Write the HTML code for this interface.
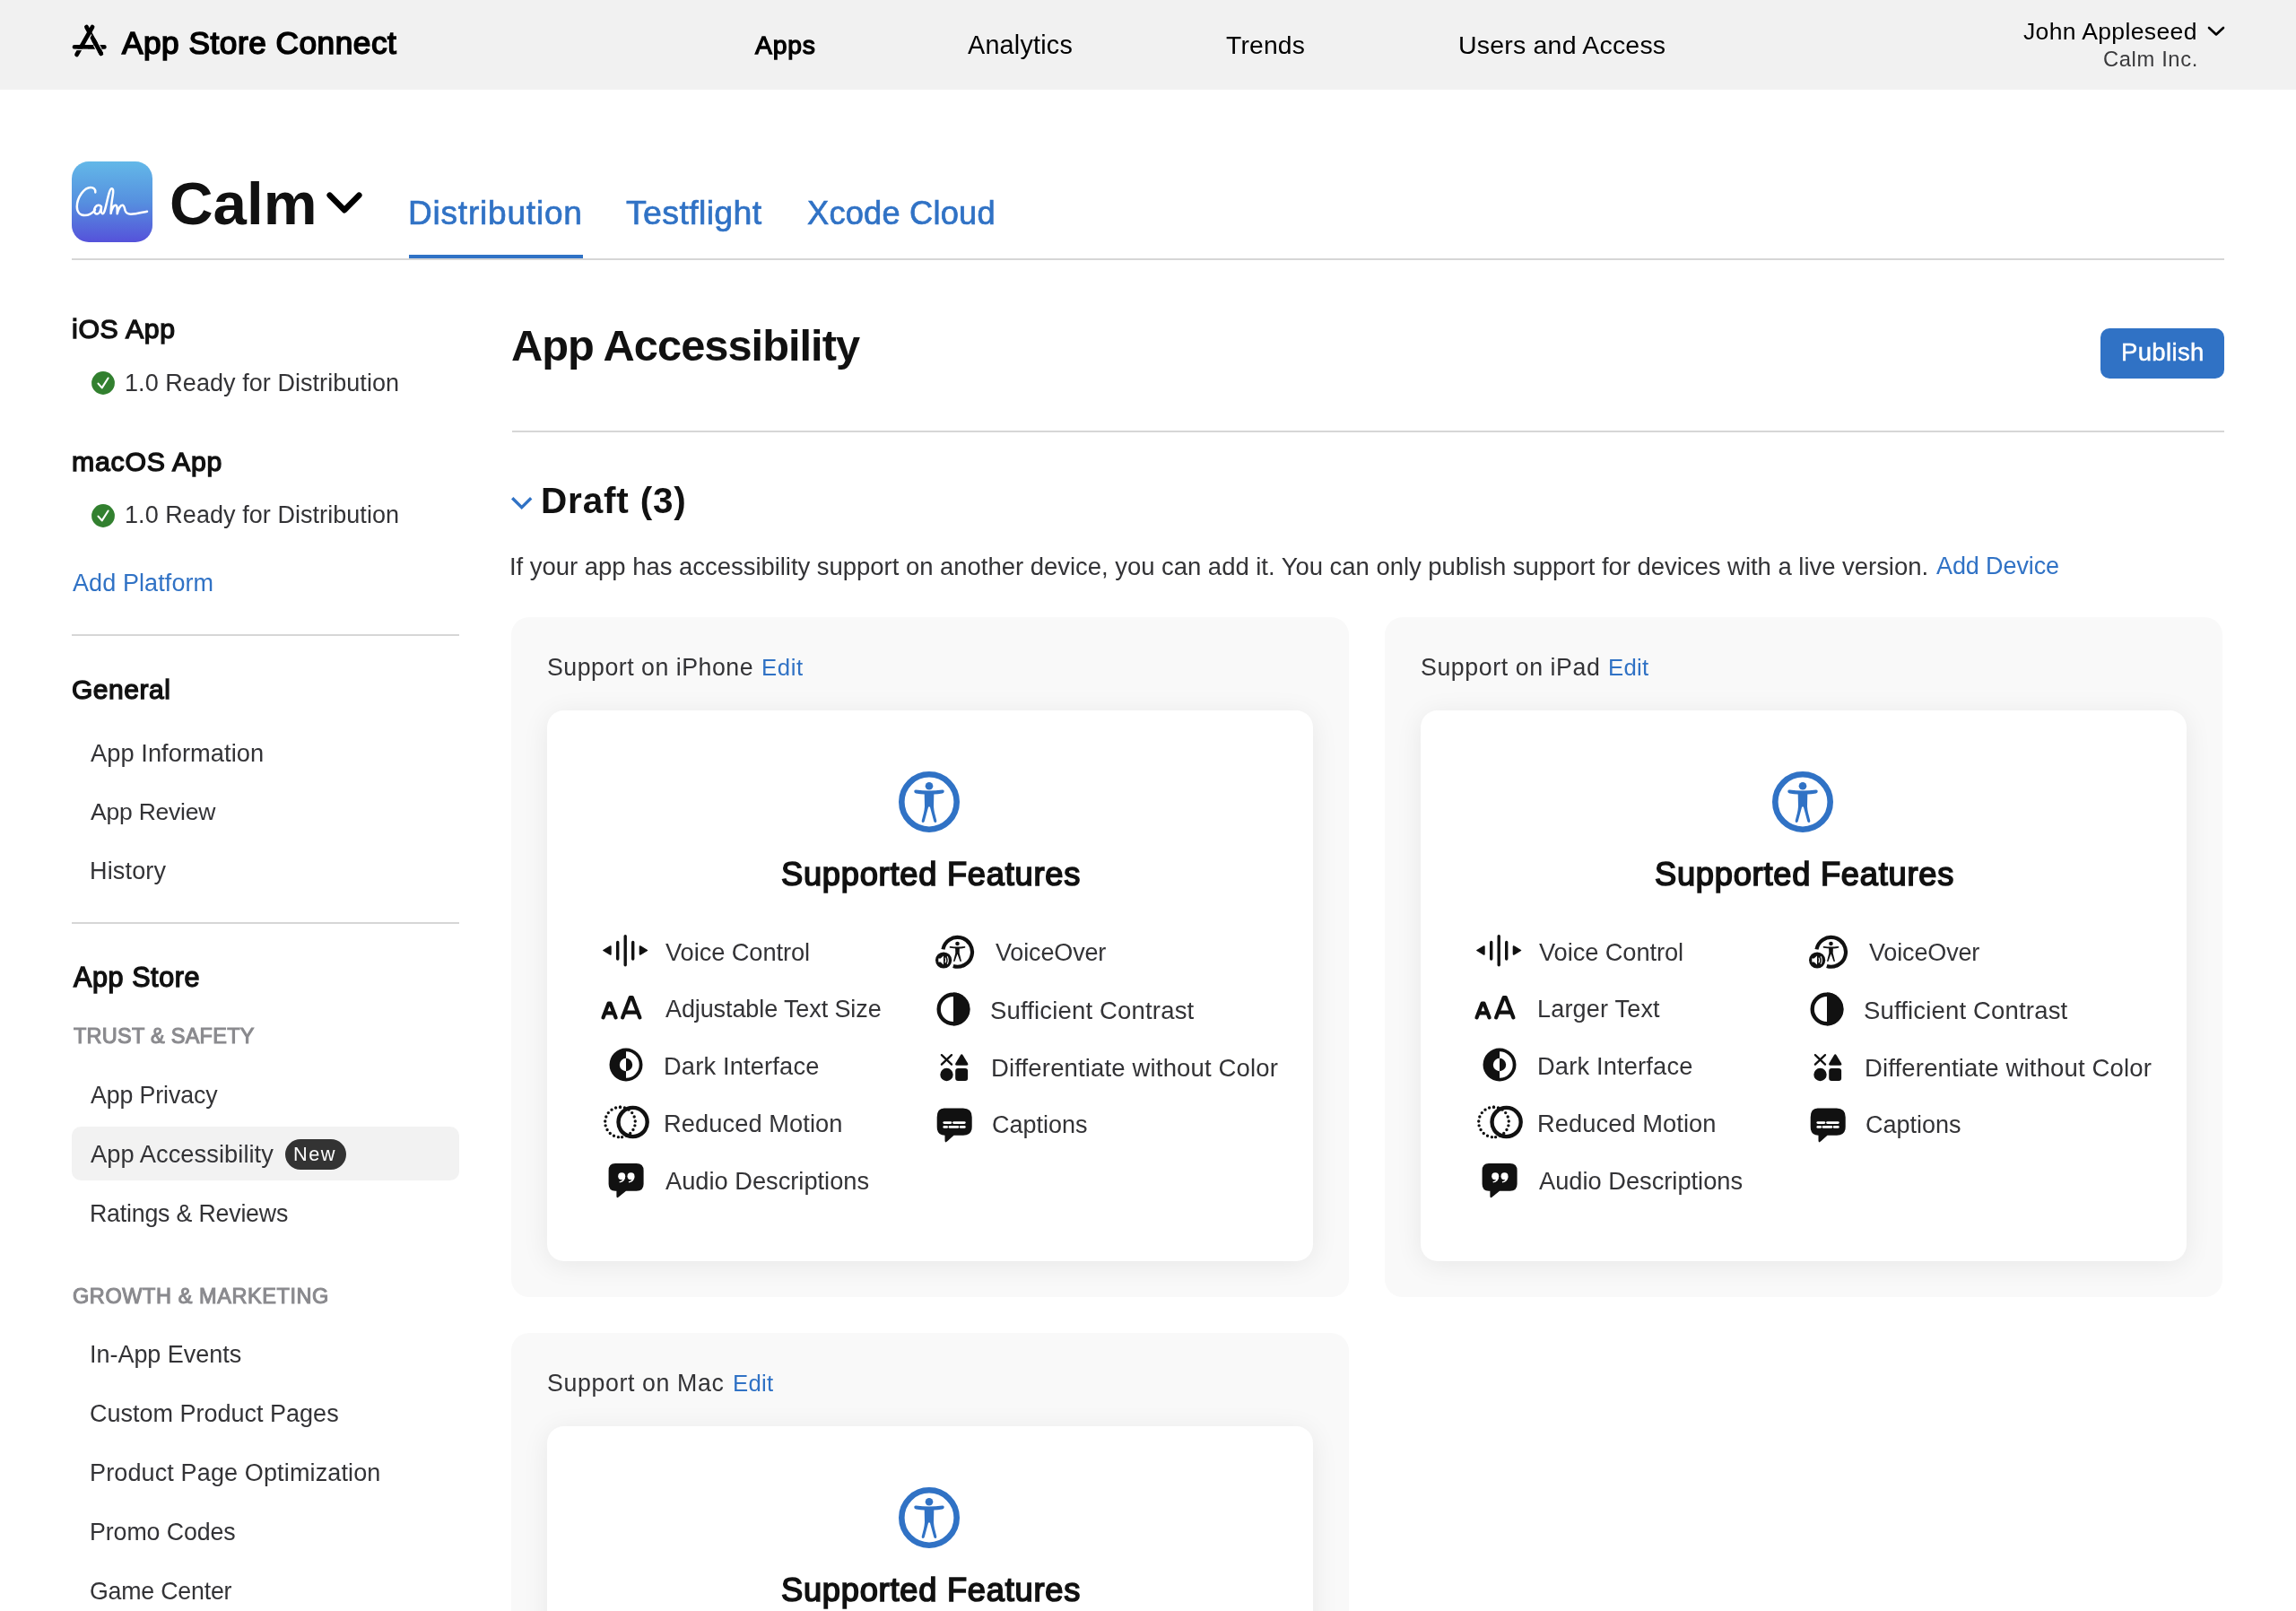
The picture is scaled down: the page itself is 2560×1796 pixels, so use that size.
<!DOCTYPE html>
<html><head><meta charset="utf-8"><title>App Store Connect</title>
<style>
html,body{margin:0;padding:0;background:#fff;width:2560px;height:1796px;overflow:hidden;position:relative}
body{font-family:"Liberation Sans",sans-serif;-webkit-font-smoothing:antialiased}
.t{position:absolute;white-space:nowrap;will-change:transform}
svg{overflow:visible}
</style></head><body>
<div style="position:absolute;left:0px;top:0px;width:2560px;height:100px;background:#f1f1f1"></div>
<svg style="position:absolute;left:78px;top:25px" width="44" height="40" viewBox="0 0 44 40"><g stroke-linecap="round" fill="none">
<line x1="18.4" y1="5" x2="34.8" y2="34.8" stroke="#000" stroke-width="4.7"/>
<line x1="23.7" y1="13.5" x2="20.9" y2="18.5" stroke="#f1f1f1" stroke-width="1.5" stroke-linecap="butt"/>
<line x1="25.1" y1="5" x2="7.5" y2="36" stroke="#000" stroke-width="4.7"/>
<line x1="5.05" y1="27.45" x2="38.35" y2="27.45" stroke="#000" stroke-width="4.7"/>
<rect x="2" y="29.8" width="18" height="1.3" fill="#f1f1f1" stroke="none"/>
<line x1="28.85" y1="24" x2="32.7" y2="31" stroke="#f1f1f1" stroke-width="6.8" stroke-linecap="butt"/>
<line x1="26.65" y1="20" x2="34.8" y2="34.8" stroke="#000" stroke-width="4.7"/>
</g></svg>
<div class="t " style="left:135.93px;top:29.86px;font-size:35.25px;line-height:35.25px;letter-spacing:0.500px;color:#000;-webkit-text-stroke:1.59px #000;">App Store Connect</div>
<div class="t " style="left:841.94px;top:35.85px;font-size:28.25px;line-height:28.25px;letter-spacing:0.833px;color:#000;-webkit-text-stroke:1.27px #000;">Apps</div>
<div class="t " style="left:1078.94px;top:36.06px;font-size:28.75px;line-height:28.75px;letter-spacing:0.225px;color:#000;">Analytics</div>
<div class="t " style="left:1367.37px;top:36.48px;font-size:28.25px;line-height:28.25px;letter-spacing:0.200px;color:#000;">Trends</div>
<div class="t " style="left:1625.80px;top:36.27px;font-size:28.5px;line-height:28.5px;letter-spacing:0.200px;color:#000;">Users and Access</div>
<div class="t " style="left:2255.79px;top:21.56px;font-size:26.5px;line-height:26.5px;letter-spacing:0.369px;color:#000;">John Appleseed</div>
<svg style="position:absolute;left:2460px;top:28px" width="22" height="14" viewBox="0 0 22 14"><polyline points="3,3 11,10.5 19,3" fill="none" stroke="#000" stroke-width="2.6" stroke-linecap="round" stroke-linejoin="round"/></svg>
<div class="t " style="left:2344.79px;top:53.89px;font-size:23.75px;line-height:23.75px;letter-spacing:0.625px;color:#3a3a3c;">Calm Inc.</div>
<svg style="position:absolute;left:80px;top:180px" width="90" height="90" viewBox="0 0 90 90"><defs><linearGradient id="cg" x1="0" y1="0" x2="0" y2="1"><stop offset="0" stop-color="#63b8e8"/><stop offset="0.5" stop-color="#5690df"/><stop offset="1" stop-color="#5552da"/></linearGradient></defs>
<rect x="0" y="0" width="90" height="90" rx="19" fill="url(#cg)"/>
<path d="M26.3 34.4 C26.6 31 24.5 28.9 21 28.9 C14 28.9 5.8 40 5.8 50.5 C5.8 56.5 9.5 60.1 14.6 60.1 C19.5 60.1 23.5 57 26 54 M33 50.4 C31.8 48.9 30.6 48.6 29.6 48.7 C26.8 49 25 52.5 25.1 55 C25.2 57.4 26.6 58.7 28.3 58.6 C30.6 58.4 32.2 55 33 50.6 C32.7 54 32.8 58.1 34.3 58.3 C36.2 58.4 37.6 52 39.2 45 C41 37 42.6 30.3 44.6 30.3 C46.6 30.3 46.4 34 45.7 38 C44.9 43 43.6 50 43.6 58.1 C44.6 53 46.8 48.7 48.8 48.7 C51 48.7 50.8 54 50.7 58.3 C51.8 53.5 54.2 48.7 56.4 48.7 C58.6 48.7 59 52.5 59.5 54.5 C60.5 57.8 62.5 58.8 66 58.7 C72 58.5 78 56.8 84 55.7" fill="none" stroke="#fff" stroke-width="2.5" stroke-linecap="round" stroke-linejoin="round"/></svg>
<div class="t " style="left:189.24px;top:193.06px;font-size:67.25px;line-height:67.25px;letter-spacing:0.000px;color:#111;font-weight:700;">Calm</div>
<svg style="position:absolute;left:360px;top:210px" width="48" height="32" viewBox="0 0 48 32"><polyline points="7.7,7.7 24,24.2 40.3,7.7" fill="none" stroke="#000" stroke-width="6.6" stroke-linecap="round" stroke-linejoin="round"/></svg>
<div class="t " style="left:455.06px;top:218.97px;font-size:37.0px;line-height:37.0px;letter-spacing:0.800px;color:#3072c5;-webkit-text-stroke:0.7px #3072c5;">Distribution</div>
<div class="t " style="left:697.96px;top:218.55px;font-size:37.5px;line-height:37.5px;letter-spacing:0.356px;color:#3072c5;-webkit-text-stroke:0.7px #3072c5;">Testflight</div>
<div class="t " style="left:899.59px;top:219.61px;font-size:36.25px;line-height:36.25px;letter-spacing:0.200px;color:#3072c5;-webkit-text-stroke:0.7px #3072c5;">Xcode Cloud</div>
<div style="position:absolute;left:456px;top:284px;width:194px;height:4px;background:#3072c5"></div>
<div style="position:absolute;left:80px;top:288px;width:2400px;height:2px;background:#d6d6d6"></div>
<div class="t " style="left:79.98px;top:352.11px;font-size:30.25px;line-height:30.25px;letter-spacing:0.683px;color:#111;-webkit-text-stroke:1.36px #111;">iOS App</div>
<svg style="position:absolute;left:102px;top:414px" width="26" height="26" viewBox="0 0 26 26"><circle cx="13" cy="13" r="12.9" fill="#32802f"/><polyline points="7.5,13.6 11.7,18.4 18.6,7.5" fill="none" stroke="#fff" stroke-width="2.1" stroke-linecap="round" stroke-linejoin="round"/></svg>
<div class="t " style="left:138.74px;top:413.54px;font-size:27.0px;line-height:27.0px;letter-spacing:0.056px;color:#333336;">1.0 Ready for Distribution</div>
<div class="t " style="left:79.99px;top:499.71px;font-size:30.25px;line-height:30.25px;letter-spacing:0.750px;color:#111;-webkit-text-stroke:1.36px #111;">macOS App</div>
<svg style="position:absolute;left:102px;top:561.7px" width="26" height="26" viewBox="0 0 26 26"><circle cx="13" cy="13" r="12.9" fill="#32802f"/><polyline points="7.5,13.6 11.7,18.4 18.6,7.5" fill="none" stroke="#fff" stroke-width="2.1" stroke-linecap="round" stroke-linejoin="round"/></svg>
<div class="t " style="left:138.74px;top:561.14px;font-size:27.0px;line-height:27.0px;letter-spacing:0.056px;color:#333336;">1.0 Ready for Distribution</div>
<div class="t " style="left:80.95px;top:637.14px;font-size:27.0px;line-height:27.0px;letter-spacing:0.091px;color:#3072c5;">Add Platform</div>
<div style="position:absolute;left:80px;top:707px;width:432px;height:2px;background:#d6d6d6"></div>
<div class="t " style="left:80.49px;top:753.92px;font-size:30.0px;line-height:30.0px;letter-spacing:0.533px;color:#111;-webkit-text-stroke:1.35px #111;">General</div>
<div class="t " style="left:101.15px;top:825.53px;font-size:27.25px;line-height:27.25px;letter-spacing:0.057px;color:#333336;">App Information</div>
<div class="t " style="left:101.15px;top:892.26px;font-size:26.5px;line-height:26.5px;letter-spacing:-0.222px;color:#333336;">App Review</div>
<div class="t " style="left:99.99px;top:957.64px;font-size:27.0px;line-height:27.0px;letter-spacing:0.167px;color:#333336;">History</div>
<div style="position:absolute;left:80px;top:1028px;width:432px;height:2px;background:#d6d6d6"></div>
<div class="t " style="left:81.94px;top:1073.99px;font-size:30.5px;line-height:30.5px;letter-spacing:0.600px;color:#111;-webkit-text-stroke:1.37px #111;">App Store</div>
<div class="t " style="left:81.97px;top:1144.07px;font-size:23.5px;line-height:23.5px;letter-spacing:0.262px;color:#8a8a8e;-webkit-text-stroke:1.06px #8a8a8e;">TRUST &amp; SAFETY</div>
<div class="t " style="left:101.15px;top:1208.35px;font-size:26.75px;line-height:26.75px;letter-spacing:-0.120px;color:#333336;">App Privacy</div>
<div style="position:absolute;left:80px;top:1256px;width:432px;height:60px;background:#f2f2f2;border-radius:10px"></div>
<div class="t " style="left:101.15px;top:1273.43px;font-size:27.25px;line-height:27.25px;letter-spacing:0.056px;color:#333336;">App Accessibility</div>
<div style="position:absolute;left:318px;top:1270px;width:68px;height:34px;background:#333;border-radius:17px"></div>
<div class="t " style="left:327.22px;top:1275.98px;font-size:21.75px;line-height:21.75px;letter-spacing:1.500px;color:#fff;">New</div>
<div class="t " style="left:100.01px;top:1339.65px;font-size:26.75px;line-height:26.75px;letter-spacing:-0.200px;color:#333336;">Ratings &amp; Reviews</div>
<div class="t " style="left:81.32px;top:1433.57px;font-size:23.5px;line-height:23.5px;letter-spacing:0.582px;color:#8a8a8e;-webkit-text-stroke:1.06px #8a8a8e;">GROWTH &amp; MARKETING</div>
<div class="t " style="left:99.71px;top:1497.14px;font-size:27.0px;line-height:27.0px;letter-spacing:-0.033px;color:#333336;">In-App Events</div>
<div class="t " style="left:99.83px;top:1563.14px;font-size:27.0px;line-height:27.0px;letter-spacing:0.000px;color:#333336;">Custom Product Pages</div>
<div class="t " style="left:99.99px;top:1629.14px;font-size:27.0px;line-height:27.0px;letter-spacing:0.133px;color:#333336;">Product Page Optimization</div>
<div class="t " style="left:100.01px;top:1695.35px;font-size:26.75px;line-height:26.75px;letter-spacing:-0.080px;color:#333336;">Promo Codes</div>
<div class="t " style="left:99.85px;top:1761.05px;font-size:26.75px;line-height:26.75px;letter-spacing:-0.210px;color:#333336;">Game Center</div>
<div class="t " style="left:569.79px;top:361.42px;font-size:48.75px;line-height:48.75px;letter-spacing:-0.969px;color:#111;font-weight:700;">App Accessibility</div>
<div style="position:absolute;left:2342px;top:366px;width:138px;height:56px;background:#3072c5;border-radius:10px"></div>
<div class="t " style="left:2364.74px;top:379.42px;font-size:27.5px;line-height:27.5px;letter-spacing:0.350px;color:#fff;-webkit-text-stroke:0.45px #fff;">Publish</div>
<div style="position:absolute;left:571px;top:480px;width:1909px;height:2px;background:#d6d6d6"></div>
<svg style="position:absolute;left:568px;top:550px" width="30" height="22" viewBox="0 0 30 22"><polyline points="3.2,5.3 13.7,15.6 24.2,5.3" fill="none" stroke="#3072c5" stroke-width="3.4" stroke-linecap="butt" stroke-linejoin="miter"/></svg>
<div class="t " style="left:603.29px;top:538.31px;font-size:40.5px;line-height:40.5px;letter-spacing:0.812px;color:#111;font-weight:700;">Draft (3)</div>
<div class="t " style="left:568.46px;top:617.72px;font-size:27.5px;line-height:27.5px;letter-spacing:-0.035px;color:#333336;">If your app has accessibility support on another device, you can add it. You can only publish support for devices with a live version.</div>
<div class="t " style="left:2158.95px;top:618.14px;font-size:27.0px;line-height:27.0px;letter-spacing:-0.111px;color:#3072c5;">Add Device</div>
<div style="position:absolute;left:570px;top:688px;width:934px;height:758px;background:#f9f9f9;border-radius:20px"></div>
<div class="t " style="left:609.79px;top:731.35px;font-size:26.75px;line-height:26.75px;letter-spacing:0.494px;color:#333336;">Support on iPhone</div>
<div class="t " style="left:849.09px;top:732.20px;font-size:25.75px;line-height:25.75px;letter-spacing:0.600px;color:#3072c5;">Edit</div>
<div style="position:absolute;left:610px;top:792px;width:854px;height:614px;background:#fff;border-radius:19px;box-shadow:0 4px 30px rgba(0,0,0,0.075)"></div>
<svg style="position:absolute;left:1000.2px;top:858.1px" width="72" height="72" viewBox="0 0 72 72"><circle cx="36" cy="36" r="30.7" fill="none" stroke="#3072c5" stroke-width="6.6"/>
<circle cx="36" cy="18.3" r="4.3" fill="#3072c5"/>
<path d="M19.3 24.6 Q19 22.4 21.3 22.6 Q36 24.6 50.7 22.6 Q53 22.4 52.7 24.6 Q52.6 26.2 50.8 26.4 Q45.5 27.3 41.3 27.6 L41 41 Q41.3 45 42 48 L44.3 57 Q44.6 58.8 43 59 Q41.6 59.2 41.2 57.6 L37 42 Q36 40.6 35 42 L30.8 57.6 Q30.4 59.2 29 59 Q27.4 58.8 27.7 57 L30 48 Q30.7 45 31 41 L30.7 27.6 Q26.5 27.3 21.2 26.4 Q19.4 26.2 19.3 24.6 Z" fill="#3072c5"/></svg>
<div class="t " style="left:870.85px;top:956.99px;font-size:36.25px;line-height:36.25px;letter-spacing:0.759px;color:#111;-webkit-text-stroke:1.63px #111;">Supported Features</div>
<svg style="position:absolute;left:671.5px;top:1041.5px" width="52" height="37" viewBox="0 0 52 37"><g fill="#111" stroke="#111" stroke-width="1.4" stroke-linejoin="round"><path d="M0.8 17.5 L8.2 13 Q9 12.5 9 13.5 L9 21.5 Q9 22.5 8.2 22 Z"/>
<path d="M49.6 17.5 L42.2 13 Q41.4 12.5 41.4 13.5 L41.4 21.5 Q41.4 22.5 42.2 22 Z"/></g>
<g stroke="#111" stroke-width="3.4" stroke-linecap="round"><line x1="16.7" y1="8.4" x2="16.7" y2="27"/><line x1="25.2" y1="1.7" x2="25.2" y2="33.8"/><line x1="33.7" y1="8.4" x2="33.7" y2="27"/></g></svg>
<div class="t " style="left:741.88px;top:1047.73px;font-size:27.25px;line-height:27.25px;letter-spacing:-0.083px;color:#333336;">Voice Control</div>
<svg style="position:absolute;left:668px;top:1108px" width="50" height="30" viewBox="0 0 50 30"><g fill="none" stroke="#111" stroke-width="4.2" stroke-linecap="round" stroke-linejoin="round">
<path d="M4.5 26.4 L10.6 10.5 L12.5 10.5 L18.6 26.4"/><line x1="7.2" y1="21.3" x2="15.9" y2="21.3"/>
<path d="M26.1 26.4 L34.7 4.1 L36.8 4.1 L45.4 26.4"/><line x1="29.2" y1="20.6" x2="42.3" y2="20.6"/></g></svg>
<div class="t " style="left:741.95px;top:1111.84px;font-size:27.0px;line-height:27.0px;letter-spacing:-0.105px;color:#333336;">Adjustable Text Size</div>
<svg style="position:absolute;left:677.5px;top:1166.5px" width="40" height="40" viewBox="0 0 40 40"><circle cx="20" cy="20" r="18.5" fill="#111"/>
<path d="M20 5.3 A14.7 14.7 0 0 1 20 34.7 Z" fill="#fff"/>
<path d="M20 12.8 A7.2 7.2 0 0 0 20 27.2 Z" fill="#fff"/>
<path d="M20 12.8 A7.2 7.2 0 0 1 20 27.2 Z" fill="#111"/></svg>
<div class="t " style="left:739.76px;top:1174.93px;font-size:27.25px;line-height:27.25px;letter-spacing:0.169px;color:#333336;">Dark Interface</div>
<svg style="position:absolute;left:672px;top:1230px" width="54" height="42" viewBox="0 0 54 42"><path d="M19.5 4.2 A16.8 16.8 0 0 0 19.5 37.8" fill="none" stroke="#111" stroke-width="3.4" stroke-dasharray="0 5.027" stroke-linecap="round"/>
<circle cx="33.6" cy="21" r="16.1" fill="none" stroke="#fff" stroke-width="7"/>
<circle cx="33.6" cy="21" r="16.1" fill="none" stroke="#111" stroke-width="4.4"/>
<path d="M19.5 4.2 A16.8 16.8 0 0 1 19.5 37.8" fill="none" stroke="#111" stroke-width="3.4" stroke-dasharray="0 5.027" stroke-linecap="round"/></svg>
<div class="t " style="left:739.76px;top:1238.93px;font-size:27.25px;line-height:27.25px;letter-spacing:0.077px;color:#333336;">Reduced Motion</div>
<svg style="position:absolute;left:677px;top:1295px" width="42" height="42" viewBox="0 0 42 42"><path d="M9 2.1 L32.6 2.1 Q40.6 2.1 40.6 10.1 L40.6 25 Q40.6 32.7 32.6 32.7 L21 32.7 L12.7 39.6 Q10.4 41.2 10.4 38.6 L10.4 32.7 L9 32.7 Q1.6 32.7 1.6 25 L1.6 10.1 Q1.6 2.1 9 2.1 Z" fill="#111"/>
<g fill="#fff"><circle cx="16.2" cy="16.3" r="4.0"/><path d="M20.1 17.1 Q20.2 22.5 13.8 23.5 L13.5 22.3 Q17.6 21.1 17.2 18.9 Z"/><circle cx="26.5" cy="16.3" r="4.0"/><path d="M30.4 17.1 Q30.5 22.5 24.1 23.5 L23.8 22.3 Q27.9 21.1 27.5 18.9 Z"/></g></svg>
<div class="t " style="left:741.95px;top:1302.53px;font-size:27.25px;line-height:27.25px;letter-spacing:-0.006px;color:#333336;">Audio Descriptions</div>
<svg style="position:absolute;left:1042px;top:1041px" width="46" height="40" viewBox="0 0 46 40"><path d="M9.45 17.45 A16.4 16.4 0 1 1 20.8 36" fill="none" stroke="#111" stroke-width="4.2"/>
<circle cx="10.1" cy="29.5" r="10.8" fill="#fff"/>
<circle cx="10.1" cy="29.5" r="9.1" fill="#111"/>
<path d="M4.3 27.6 L6.6 27.6 L10 24.6 L10 34.4 L6.6 31.4 L4.3 31.4 Z" fill="#fff"/>
<path d="M12 26.6 Q13.3 29.5 12 32.4 M14.2 25.2 Q16.3 29.5 14.2 33.8" fill="none" stroke="#fff" stroke-width="1.1"/>
<circle cx="25.5" cy="11" r="2.3" fill="#111"/>
<path d="M17.6 14.9 Q25.5 16.2 33.4 14.9" fill="none" stroke="#111" stroke-width="1.9" stroke-linecap="round"/>
<path d="M23.1 15 L27.9 15 L27.7 21.5 L29.9 30.3 Q30 31 29.2 31 Q28.6 31 28.4 30.4 L25.5 22.5 L22.6 30.4 Q22.4 31 21.8 31 Q21 31 21.1 30.3 L23.3 21.5 Z" fill="#111"/></svg>
<div class="t " style="left:1110.08px;top:1049.14px;font-size:27.0px;line-height:27.0px;letter-spacing:-0.150px;color:#333336;">VoiceOver</div>
<svg style="position:absolute;left:1043px;top:1105px" width="40" height="40" viewBox="0 0 40 40"><circle cx="20" cy="20" r="16.3" fill="none" stroke="#111" stroke-width="4.4"/><path d="M20 1.6 A18.4 18.4 0 0 1 20 38.4 Z" fill="#111"/></svg>
<div class="t " style="left:1103.75px;top:1112.92px;font-size:27.5px;line-height:27.5px;letter-spacing:0.167px;color:#333336;">Sufficient Contrast</div>
<svg style="position:absolute;left:1046px;top:1173px" width="36" height="34" viewBox="0 0 36 34"><g stroke="#111" stroke-width="2.3" stroke-linecap="round"><line x1="3.9" y1="3.1" x2="15" y2="13.7"/><line x1="15" y1="3.1" x2="3.9" y2="13.7"/></g>
<path d="M24.8 3.4 Q26.25 1.1 27.7 3.4 L33 12.2 Q34.2 14.7 31.5 14.7 L21 14.7 Q18.3 14.7 19.5 12.2 Z" fill="#111"/>
<circle cx="9.5" cy="25" r="7.2" fill="#111"/><rect x="19.2" y="18.1" width="13.9" height="13.9" rx="3" fill="#111"/></svg>
<div class="t " style="left:1105.44px;top:1176.72px;font-size:27.5px;line-height:27.5px;letter-spacing:0.154px;color:#333336;">Differentiate without Color</div>
<svg style="position:absolute;left:1043px;top:1234px" width="42" height="40" viewBox="0 0 42 40"><path d="M9.7 1.6 L30.8 1.6 Q40.7 1.6 40.7 11.6 L40.7 22.2 Q40.7 31.7 31 31.7 L20.5 31.7 L13 38.6 Q10.5 40.6 10.5 37.6 L10.5 31.7 Q1.7 31.7 1.7 22.2 L1.7 11.6 Q1.7 1.6 9.7 1.6 Z" fill="#111"/>
<g stroke="#fff" stroke-width="2.8" stroke-linecap="round"><line x1="9.8" y1="17.6" x2="16.9" y2="17.6"/><line x1="20.5" y1="17.6" x2="32.3" y2="17.6"/>
<line x1="9.8" y1="22.4" x2="12.6" y2="22.4"/><line x1="16" y1="22.4" x2="24.8" y2="22.4"/><line x1="28.2" y1="22.4" x2="32.3" y2="22.4"/></g></svg>
<div class="t " style="left:1106.43px;top:1241.14px;font-size:27.0px;line-height:27.0px;letter-spacing:0.000px;color:#333336;">Captions</div>
<div style="position:absolute;left:1544px;top:688px;width:934px;height:758px;background:#f9f9f9;border-radius:20px"></div>
<div class="t " style="left:1583.79px;top:731.35px;font-size:26.75px;line-height:26.75px;letter-spacing:0.571px;color:#333336;">Support on iPad</div>
<div class="t " style="left:1792.89px;top:732.20px;font-size:25.75px;line-height:25.75px;letter-spacing:0.267px;color:#3072c5;">Edit</div>
<div style="position:absolute;left:1584px;top:792px;width:854px;height:614px;background:#fff;border-radius:19px;box-shadow:0 4px 30px rgba(0,0,0,0.075)"></div>
<svg style="position:absolute;left:1974.2px;top:858.1px" width="72" height="72" viewBox="0 0 72 72"><circle cx="36" cy="36" r="30.7" fill="none" stroke="#3072c5" stroke-width="6.6"/>
<circle cx="36" cy="18.3" r="4.3" fill="#3072c5"/>
<path d="M19.3 24.6 Q19 22.4 21.3 22.6 Q36 24.6 50.7 22.6 Q53 22.4 52.7 24.6 Q52.6 26.2 50.8 26.4 Q45.5 27.3 41.3 27.6 L41 41 Q41.3 45 42 48 L44.3 57 Q44.6 58.8 43 59 Q41.6 59.2 41.2 57.6 L37 42 Q36 40.6 35 42 L30.8 57.6 Q30.4 59.2 29 59 Q27.4 58.8 27.7 57 L30 48 Q30.7 45 31 41 L30.7 27.6 Q26.5 27.3 21.2 26.4 Q19.4 26.2 19.3 24.6 Z" fill="#3072c5"/></svg>
<div class="t " style="left:1844.85px;top:956.99px;font-size:36.25px;line-height:36.25px;letter-spacing:0.759px;color:#111;-webkit-text-stroke:1.63px #111;">Supported Features</div>
<svg style="position:absolute;left:1645.5px;top:1041.5px" width="52" height="37" viewBox="0 0 52 37"><g fill="#111" stroke="#111" stroke-width="1.4" stroke-linejoin="round"><path d="M0.8 17.5 L8.2 13 Q9 12.5 9 13.5 L9 21.5 Q9 22.5 8.2 22 Z"/>
<path d="M49.6 17.5 L42.2 13 Q41.4 12.5 41.4 13.5 L41.4 21.5 Q41.4 22.5 42.2 22 Z"/></g>
<g stroke="#111" stroke-width="3.4" stroke-linecap="round"><line x1="16.7" y1="8.4" x2="16.7" y2="27"/><line x1="25.2" y1="1.7" x2="25.2" y2="33.8"/><line x1="33.7" y1="8.4" x2="33.7" y2="27"/></g></svg>
<div class="t " style="left:1715.88px;top:1047.73px;font-size:27.25px;line-height:27.25px;letter-spacing:-0.083px;color:#333336;">Voice Control</div>
<svg style="position:absolute;left:1642px;top:1108px" width="50" height="30" viewBox="0 0 50 30"><g fill="none" stroke="#111" stroke-width="4.2" stroke-linecap="round" stroke-linejoin="round">
<path d="M4.5 26.4 L10.6 10.5 L12.5 10.5 L18.6 26.4"/><line x1="7.2" y1="21.3" x2="15.9" y2="21.3"/>
<path d="M26.1 26.4 L34.7 4.1 L36.8 4.1 L45.4 26.4"/><line x1="29.2" y1="20.6" x2="42.3" y2="20.6"/></g></svg>
<div class="t " style="left:1713.79px;top:1111.84px;font-size:27.0px;line-height:27.0px;letter-spacing:0.200px;color:#333336;">Larger Text</div>
<svg style="position:absolute;left:1651.5px;top:1166.5px" width="40" height="40" viewBox="0 0 40 40"><circle cx="20" cy="20" r="18.5" fill="#111"/>
<path d="M20 5.3 A14.7 14.7 0 0 1 20 34.7 Z" fill="#fff"/>
<path d="M20 12.8 A7.2 7.2 0 0 0 20 27.2 Z" fill="#fff"/>
<path d="M20 12.8 A7.2 7.2 0 0 1 20 27.2 Z" fill="#111"/></svg>
<div class="t " style="left:1713.76px;top:1174.93px;font-size:27.25px;line-height:27.25px;letter-spacing:0.169px;color:#333336;">Dark Interface</div>
<svg style="position:absolute;left:1646px;top:1230px" width="54" height="42" viewBox="0 0 54 42"><path d="M19.5 4.2 A16.8 16.8 0 0 0 19.5 37.8" fill="none" stroke="#111" stroke-width="3.4" stroke-dasharray="0 5.027" stroke-linecap="round"/>
<circle cx="33.6" cy="21" r="16.1" fill="none" stroke="#fff" stroke-width="7"/>
<circle cx="33.6" cy="21" r="16.1" fill="none" stroke="#111" stroke-width="4.4"/>
<path d="M19.5 4.2 A16.8 16.8 0 0 1 19.5 37.8" fill="none" stroke="#111" stroke-width="3.4" stroke-dasharray="0 5.027" stroke-linecap="round"/></svg>
<div class="t " style="left:1713.76px;top:1238.93px;font-size:27.25px;line-height:27.25px;letter-spacing:0.077px;color:#333336;">Reduced Motion</div>
<svg style="position:absolute;left:1651px;top:1295px" width="42" height="42" viewBox="0 0 42 42"><path d="M9 2.1 L32.6 2.1 Q40.6 2.1 40.6 10.1 L40.6 25 Q40.6 32.7 32.6 32.7 L21 32.7 L12.7 39.6 Q10.4 41.2 10.4 38.6 L10.4 32.7 L9 32.7 Q1.6 32.7 1.6 25 L1.6 10.1 Q1.6 2.1 9 2.1 Z" fill="#111"/>
<g fill="#fff"><circle cx="16.2" cy="16.3" r="4.0"/><path d="M20.1 17.1 Q20.2 22.5 13.8 23.5 L13.5 22.3 Q17.6 21.1 17.2 18.9 Z"/><circle cx="26.5" cy="16.3" r="4.0"/><path d="M30.4 17.1 Q30.5 22.5 24.1 23.5 L23.8 22.3 Q27.9 21.1 27.5 18.9 Z"/></g></svg>
<div class="t " style="left:1715.95px;top:1302.53px;font-size:27.25px;line-height:27.25px;letter-spacing:-0.006px;color:#333336;">Audio Descriptions</div>
<svg style="position:absolute;left:2016px;top:1041px" width="46" height="40" viewBox="0 0 46 40"><path d="M9.45 17.45 A16.4 16.4 0 1 1 20.8 36" fill="none" stroke="#111" stroke-width="4.2"/>
<circle cx="10.1" cy="29.5" r="10.8" fill="#fff"/>
<circle cx="10.1" cy="29.5" r="9.1" fill="#111"/>
<path d="M4.3 27.6 L6.6 27.6 L10 24.6 L10 34.4 L6.6 31.4 L4.3 31.4 Z" fill="#fff"/>
<path d="M12 26.6 Q13.3 29.5 12 32.4 M14.2 25.2 Q16.3 29.5 14.2 33.8" fill="none" stroke="#fff" stroke-width="1.1"/>
<circle cx="25.5" cy="11" r="2.3" fill="#111"/>
<path d="M17.6 14.9 Q25.5 16.2 33.4 14.9" fill="none" stroke="#111" stroke-width="1.9" stroke-linecap="round"/>
<path d="M23.1 15 L27.9 15 L27.7 21.5 L29.9 30.3 Q30 31 29.2 31 Q28.6 31 28.4 30.4 L25.5 22.5 L22.6 30.4 Q22.4 31 21.8 31 Q21 31 21.1 30.3 L23.3 21.5 Z" fill="#111"/></svg>
<div class="t " style="left:2084.08px;top:1049.14px;font-size:27.0px;line-height:27.0px;letter-spacing:-0.150px;color:#333336;">VoiceOver</div>
<svg style="position:absolute;left:2017px;top:1105px" width="40" height="40" viewBox="0 0 40 40"><circle cx="20" cy="20" r="16.3" fill="none" stroke="#111" stroke-width="4.4"/><path d="M20 1.6 A18.4 18.4 0 0 1 20 38.4 Z" fill="#111"/></svg>
<div class="t " style="left:2077.75px;top:1112.92px;font-size:27.5px;line-height:27.5px;letter-spacing:0.167px;color:#333336;">Sufficient Contrast</div>
<svg style="position:absolute;left:2020px;top:1173px" width="36" height="34" viewBox="0 0 36 34"><g stroke="#111" stroke-width="2.3" stroke-linecap="round"><line x1="3.9" y1="3.1" x2="15" y2="13.7"/><line x1="15" y1="3.1" x2="3.9" y2="13.7"/></g>
<path d="M24.8 3.4 Q26.25 1.1 27.7 3.4 L33 12.2 Q34.2 14.7 31.5 14.7 L21 14.7 Q18.3 14.7 19.5 12.2 Z" fill="#111"/>
<circle cx="9.5" cy="25" r="7.2" fill="#111"/><rect x="19.2" y="18.1" width="13.9" height="13.9" rx="3" fill="#111"/></svg>
<div class="t " style="left:2079.44px;top:1176.72px;font-size:27.5px;line-height:27.5px;letter-spacing:0.154px;color:#333336;">Differentiate without Color</div>
<svg style="position:absolute;left:2017px;top:1234px" width="42" height="40" viewBox="0 0 42 40"><path d="M9.7 1.6 L30.8 1.6 Q40.7 1.6 40.7 11.6 L40.7 22.2 Q40.7 31.7 31 31.7 L20.5 31.7 L13 38.6 Q10.5 40.6 10.5 37.6 L10.5 31.7 Q1.7 31.7 1.7 22.2 L1.7 11.6 Q1.7 1.6 9.7 1.6 Z" fill="#111"/>
<g stroke="#fff" stroke-width="2.8" stroke-linecap="round"><line x1="9.8" y1="17.6" x2="16.9" y2="17.6"/><line x1="20.5" y1="17.6" x2="32.3" y2="17.6"/>
<line x1="9.8" y1="22.4" x2="12.6" y2="22.4"/><line x1="16" y1="22.4" x2="24.8" y2="22.4"/><line x1="28.2" y1="22.4" x2="32.3" y2="22.4"/></g></svg>
<div class="t " style="left:2080.43px;top:1241.14px;font-size:27.0px;line-height:27.0px;letter-spacing:0.000px;color:#333336;">Captions</div>
<div style="position:absolute;left:570px;top:1486px;width:934px;height:758px;background:#f9f9f9;border-radius:20px"></div>
<div class="t " style="left:609.79px;top:1529.35px;font-size:26.75px;line-height:26.75px;letter-spacing:0.615px;color:#333336;">Support on Mac</div>
<div class="t " style="left:816.89px;top:1530.20px;font-size:25.75px;line-height:25.75px;letter-spacing:0.267px;color:#3072c5;">Edit</div>
<div style="position:absolute;left:610px;top:1590px;width:854px;height:614px;background:#fff;border-radius:19px;box-shadow:0 4px 30px rgba(0,0,0,0.075)"></div>
<svg style="position:absolute;left:1000.2px;top:1656.1px" width="72" height="72" viewBox="0 0 72 72"><circle cx="36" cy="36" r="30.7" fill="none" stroke="#3072c5" stroke-width="6.6"/>
<circle cx="36" cy="18.3" r="4.3" fill="#3072c5"/>
<path d="M19.3 24.6 Q19 22.4 21.3 22.6 Q36 24.6 50.7 22.6 Q53 22.4 52.7 24.6 Q52.6 26.2 50.8 26.4 Q45.5 27.3 41.3 27.6 L41 41 Q41.3 45 42 48 L44.3 57 Q44.6 58.8 43 59 Q41.6 59.2 41.2 57.6 L37 42 Q36 40.6 35 42 L30.8 57.6 Q30.4 59.2 29 59 Q27.4 58.8 27.7 57 L30 48 Q30.7 45 31 41 L30.7 27.6 Q26.5 27.3 21.2 26.4 Q19.4 26.2 19.3 24.6 Z" fill="#3072c5"/></svg>
<div class="t " style="left:870.85px;top:1754.99px;font-size:36.25px;line-height:36.25px;letter-spacing:0.759px;color:#111;-webkit-text-stroke:1.63px #111;">Supported Features</div>
<svg style="position:absolute;left:671.5px;top:1839.5px" width="52" height="37" viewBox="0 0 52 37"><g fill="#111" stroke="#111" stroke-width="1.4" stroke-linejoin="round"><path d="M0.8 17.5 L8.2 13 Q9 12.5 9 13.5 L9 21.5 Q9 22.5 8.2 22 Z"/>
<path d="M49.6 17.5 L42.2 13 Q41.4 12.5 41.4 13.5 L41.4 21.5 Q41.4 22.5 42.2 22 Z"/></g>
<g stroke="#111" stroke-width="3.4" stroke-linecap="round"><line x1="16.7" y1="8.4" x2="16.7" y2="27"/><line x1="25.2" y1="1.7" x2="25.2" y2="33.8"/><line x1="33.7" y1="8.4" x2="33.7" y2="27"/></g></svg>
<div class="t " style="left:741.88px;top:1845.73px;font-size:27.25px;line-height:27.25px;letter-spacing:-0.083px;color:#333336;">Voice Control</div>
<svg style="position:absolute;left:668px;top:1906px" width="50" height="30" viewBox="0 0 50 30"><g fill="none" stroke="#111" stroke-width="4.2" stroke-linecap="round" stroke-linejoin="round">
<path d="M4.5 26.4 L10.6 10.5 L12.5 10.5 L18.6 26.4"/><line x1="7.2" y1="21.3" x2="15.9" y2="21.3"/>
<path d="M26.1 26.4 L34.7 4.1 L36.8 4.1 L45.4 26.4"/><line x1="29.2" y1="20.6" x2="42.3" y2="20.6"/></g></svg>
<div class="t " style="left:741.95px;top:1909.84px;font-size:27.0px;line-height:27.0px;letter-spacing:-0.105px;color:#333336;">Adjustable Text Size</div>
<svg style="position:absolute;left:677.5px;top:1964.5px" width="40" height="40" viewBox="0 0 40 40"><circle cx="20" cy="20" r="18.5" fill="#111"/>
<path d="M20 5.3 A14.7 14.7 0 0 1 20 34.7 Z" fill="#fff"/>
<path d="M20 12.8 A7.2 7.2 0 0 0 20 27.2 Z" fill="#fff"/>
<path d="M20 12.8 A7.2 7.2 0 0 1 20 27.2 Z" fill="#111"/></svg>
<div class="t " style="left:739.76px;top:1972.93px;font-size:27.25px;line-height:27.25px;letter-spacing:0.169px;color:#333336;">Dark Interface</div>
<svg style="position:absolute;left:672px;top:2028px" width="54" height="42" viewBox="0 0 54 42"><path d="M19.5 4.2 A16.8 16.8 0 0 0 19.5 37.8" fill="none" stroke="#111" stroke-width="3.4" stroke-dasharray="0 5.027" stroke-linecap="round"/>
<circle cx="33.6" cy="21" r="16.1" fill="none" stroke="#fff" stroke-width="7"/>
<circle cx="33.6" cy="21" r="16.1" fill="none" stroke="#111" stroke-width="4.4"/>
<path d="M19.5 4.2 A16.8 16.8 0 0 1 19.5 37.8" fill="none" stroke="#111" stroke-width="3.4" stroke-dasharray="0 5.027" stroke-linecap="round"/></svg>
<div class="t " style="left:739.76px;top:2036.93px;font-size:27.25px;line-height:27.25px;letter-spacing:0.077px;color:#333336;">Reduced Motion</div>
<svg style="position:absolute;left:677px;top:2093px" width="42" height="42" viewBox="0 0 42 42"><path d="M9 2.1 L32.6 2.1 Q40.6 2.1 40.6 10.1 L40.6 25 Q40.6 32.7 32.6 32.7 L21 32.7 L12.7 39.6 Q10.4 41.2 10.4 38.6 L10.4 32.7 L9 32.7 Q1.6 32.7 1.6 25 L1.6 10.1 Q1.6 2.1 9 2.1 Z" fill="#111"/>
<g fill="#fff"><circle cx="16.2" cy="16.3" r="4.0"/><path d="M20.1 17.1 Q20.2 22.5 13.8 23.5 L13.5 22.3 Q17.6 21.1 17.2 18.9 Z"/><circle cx="26.5" cy="16.3" r="4.0"/><path d="M30.4 17.1 Q30.5 22.5 24.1 23.5 L23.8 22.3 Q27.9 21.1 27.5 18.9 Z"/></g></svg>
<div class="t " style="left:741.95px;top:2100.53px;font-size:27.25px;line-height:27.25px;letter-spacing:-0.006px;color:#333336;">Audio Descriptions</div>
<svg style="position:absolute;left:1042px;top:1839px" width="46" height="40" viewBox="0 0 46 40"><path d="M9.45 17.45 A16.4 16.4 0 1 1 20.8 36" fill="none" stroke="#111" stroke-width="4.2"/>
<circle cx="10.1" cy="29.5" r="10.8" fill="#fff"/>
<circle cx="10.1" cy="29.5" r="9.1" fill="#111"/>
<path d="M4.3 27.6 L6.6 27.6 L10 24.6 L10 34.4 L6.6 31.4 L4.3 31.4 Z" fill="#fff"/>
<path d="M12 26.6 Q13.3 29.5 12 32.4 M14.2 25.2 Q16.3 29.5 14.2 33.8" fill="none" stroke="#fff" stroke-width="1.1"/>
<circle cx="25.5" cy="11" r="2.3" fill="#111"/>
<path d="M17.6 14.9 Q25.5 16.2 33.4 14.9" fill="none" stroke="#111" stroke-width="1.9" stroke-linecap="round"/>
<path d="M23.1 15 L27.9 15 L27.7 21.5 L29.9 30.3 Q30 31 29.2 31 Q28.6 31 28.4 30.4 L25.5 22.5 L22.6 30.4 Q22.4 31 21.8 31 Q21 31 21.1 30.3 L23.3 21.5 Z" fill="#111"/></svg>
<div class="t " style="left:1110.08px;top:1847.14px;font-size:27.0px;line-height:27.0px;letter-spacing:-0.150px;color:#333336;">VoiceOver</div>
<svg style="position:absolute;left:1043px;top:1903px" width="40" height="40" viewBox="0 0 40 40"><circle cx="20" cy="20" r="16.3" fill="none" stroke="#111" stroke-width="4.4"/><path d="M20 1.6 A18.4 18.4 0 0 1 20 38.4 Z" fill="#111"/></svg>
<div class="t " style="left:1103.75px;top:1910.92px;font-size:27.5px;line-height:27.5px;letter-spacing:0.167px;color:#333336;">Sufficient Contrast</div>
<svg style="position:absolute;left:1046px;top:1971px" width="36" height="34" viewBox="0 0 36 34"><g stroke="#111" stroke-width="2.3" stroke-linecap="round"><line x1="3.9" y1="3.1" x2="15" y2="13.7"/><line x1="15" y1="3.1" x2="3.9" y2="13.7"/></g>
<path d="M24.8 3.4 Q26.25 1.1 27.7 3.4 L33 12.2 Q34.2 14.7 31.5 14.7 L21 14.7 Q18.3 14.7 19.5 12.2 Z" fill="#111"/>
<circle cx="9.5" cy="25" r="7.2" fill="#111"/><rect x="19.2" y="18.1" width="13.9" height="13.9" rx="3" fill="#111"/></svg>
<div class="t " style="left:1105.44px;top:1974.72px;font-size:27.5px;line-height:27.5px;letter-spacing:0.154px;color:#333336;">Differentiate without Color</div>
<svg style="position:absolute;left:1043px;top:2032px" width="42" height="40" viewBox="0 0 42 40"><path d="M9.7 1.6 L30.8 1.6 Q40.7 1.6 40.7 11.6 L40.7 22.2 Q40.7 31.7 31 31.7 L20.5 31.7 L13 38.6 Q10.5 40.6 10.5 37.6 L10.5 31.7 Q1.7 31.7 1.7 22.2 L1.7 11.6 Q1.7 1.6 9.7 1.6 Z" fill="#111"/>
<g stroke="#fff" stroke-width="2.8" stroke-linecap="round"><line x1="9.8" y1="17.6" x2="16.9" y2="17.6"/><line x1="20.5" y1="17.6" x2="32.3" y2="17.6"/>
<line x1="9.8" y1="22.4" x2="12.6" y2="22.4"/><line x1="16" y1="22.4" x2="24.8" y2="22.4"/><line x1="28.2" y1="22.4" x2="32.3" y2="22.4"/></g></svg>
<div class="t " style="left:1106.43px;top:2039.14px;font-size:27.0px;line-height:27.0px;letter-spacing:0.000px;color:#333336;">Captions</div>
</body></html>
